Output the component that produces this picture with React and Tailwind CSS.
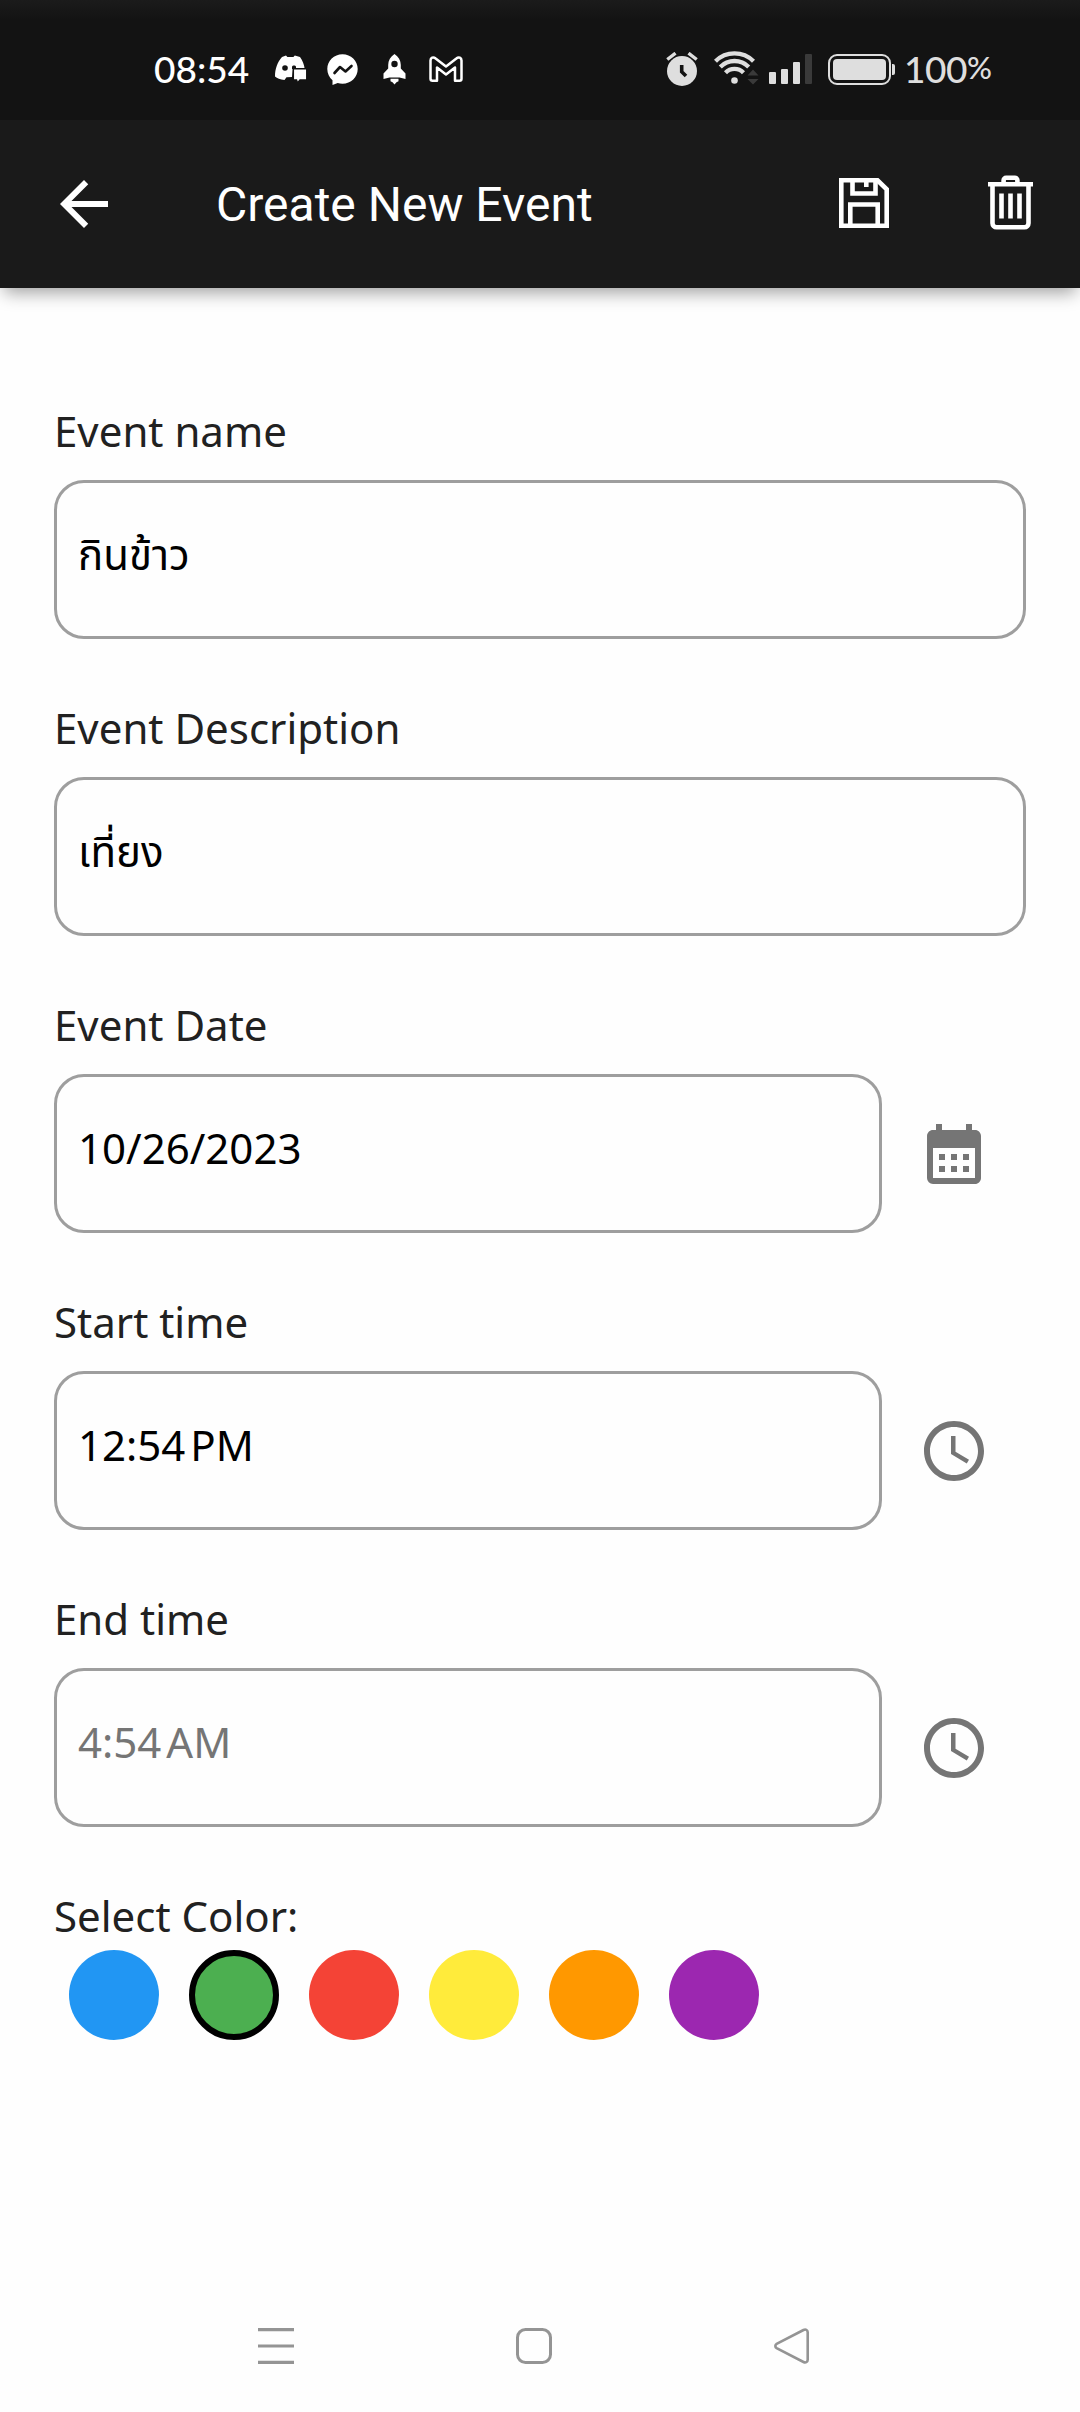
import React from "react";
import { MdArrowBack, MdCalendarMonth, MdAccessTime } from "react-icons/md";

const NOTO = "font-['Noto_Sans','Noto_Sans_Thai',sans-serif]";

function StatusBar() {
  return (
    <div className="flex h-[120px] items-center bg-[linear-gradient(to_bottom,#1b1b1b_0px,#131313_20px)] pt-[18px] font-['Lato',sans-serif] text-[37px] leading-[44px] text-white">
      <div className="ml-[154px] w-[121px] font-medium whitespace-nowrap">08:54</div>
      <svg className="h-[28px] w-[32px]" viewBox="0 0 32 28">
        <path
          fill="#fff"
          d="M7 2 11 .4l1.400 1.500h6L19.800.4 25 2c2.600 3.600 4.200 7.600 4.700 12H18l-1 8-5.500.300-2 2.700C5 24.500 2.200 23.300 0 21.500 0 13.500 2.500 7 7 2Z"
        />
        <circle cx="10" cy="13" r="2.800" fill="#131313" />
        <path fill="#131313" d="M17 11.500c.6-1.300 3.400-1.300 4 0v2.500h-4Z" />
        <path fill="#fff" stroke="#131313" strokeWidth="1.500" d="M18.300 13.800H31.800V25H25l-2.500 3-1-3h-3.200Z" />
      </svg>
      <svg className="ml-[20px] h-[31px] w-[31px]" viewBox="0 0 31 31">
        <path fill="#fff" d="M15.500.3C24 .3 30.700 6.700 30.700 15S24 29.700 15.500 29.700c-1.800 0-3.300-.2-4.800-.7L5.500 31v-4.700C2.300 23.500.3 19.600.3 15 .3 6.700 7 .3 15.500.3Z" />
        <path fill="none" stroke="#131313" strokeWidth="2.600" strokeLinejoin="round" strokeLinecap="round" d="m7.500 19 5.500-6 5.500 4.500 6-5.500" />
      </svg>
      <svg className="ml-[25px] h-[31px] w-[23px]" viewBox="0 0 23 31">
        <path fill="#fff" d="M11.500 0c4 2.800 6.300 6.500 6.300 11v3.500l4.700 5V25l-6-1.500h-10L.5 25v-5.500l4.700-5V11c0-4.500 2.300-8.200 6.300-11Z" />
        <circle cx="11.500" cy="10" r="3.200" fill="#131313" />
        <path fill="#fff" d="M7.500 24.800h8v2.500l-2 1-2 2.200-2-2.200-2-1Z" />
      </svg>
      <svg className="ml-[23px] h-[26px] w-[34px]" viewBox="0 0 34 26">
        <path
          fill="none"
          stroke="#fff"
          strokeWidth="2.500"
          strokeLinejoin="round"
          d="M8 24.700H3.500a2 2 0 0 1-2-2V4.500c0-2.600 2.800-4 4.800-2.300L17 10.500 27.700 2.200c2-1.700 4.800-.3 4.800 2.300v18.200a2 2 0 0 1-2 2H26V11.500l-9 7-9-7Z"
        />
      </svg>

      <svg className="ml-[203px] h-[34px] w-[32px]" viewBox="0 0 32 34">
        <circle cx="16" cy="19" r="15" fill="#dedede" />
        <path fill="none" stroke="#dedede" strokeWidth="3.400" d="m1.300 7.500 8.200-6.300M30.700 7.500l-8.200-6.300" />
        <path fill="none" stroke="#131313" strokeWidth="3.600" d="M15.700 13v6.800l4.300 4.300" />
      </svg>
      <svg className="mb-[3px] ml-[16px] h-[35px] w-[45px]" viewBox="0 0 45 35">
        <g fill="none" stroke="#dedede" strokeWidth="4.300">
          <path d="M1.500 11.200a27 27 0 0 1 38 0" />
          <path d="M6.300 16.900a20 20 0 0 1 28.400 0" />
          <path d="M11.500 22.700a12.600 12.600 0 0 1 18 0" />
        </g>
        <circle cx="20.500" cy="30.500" r="3.300" fill="#dedede" />
        <path fill="#3a3a3a" d="m39 19.500 5.500 6h-11ZM39 34.500l5.500-5.500h-11Z" />
      </svg>
      <div className="mb-[2px] ml-[10px] flex h-[31px] items-end gap-[5px]">
        <div className="h-[12px] w-[7px] rounded-[1px] bg-[#dedede]" />
        <div className="h-[15px] w-[7px] rounded-[1px] bg-[#dedede]" />
        <div className="h-[22px] w-[7px] rounded-[1px] bg-[#dedede]" />
        <div className="h-[30px] w-[7px] rounded-[1px] bg-[#3a3a3a]" />
      </div>
      <div className="ml-[16px] h-[31px] w-[63px] rounded-[9px] border-2 border-[#dedede] p-[3px]">
        <div className="h-full w-full rounded-[4px] bg-[#dedede]" />
      </div>
      <div className="ml-px h-[11px] w-[3px] rounded-r-[2px] bg-[#dedede]" />
      <div className="ml-[9px] flex items-start font-medium whitespace-nowrap text-[#dedede]">
        <span className="tracking-[-0.5px]">100</span>
        <span className="text-[31px] leading-[40px]">%</span>
      </div>
    </div>
  );
}

function SaveIcon() {
  return (
    <svg className="mb-[2px] h-[50px] w-[50px]" viewBox="0 0 50 50" fill="none" stroke="#fff" strokeWidth="4.600">
      <path d="M2.300 2.300h36.200l9.200 9v36.400H2.300Z" />
      <path d="M13.500 2.300v13.200h23V2.300" />
      <path d="M27.300 2v7" />
      <path d="M11.300 47.700V26.500h27.400v21.200" />
    </svg>
  );
}

function TrashIcon() {
  return (
    <svg className="mb-[3px] h-[55px] w-[45px]" viewBox="0 0 45 55" fill="none" stroke="#fff" strokeWidth="4.600">
      <path d="M0 9.200h45" />
      <path d="M15.600 9V5.300a2.500 2.500 0 0 1 2.500-2.500h8.800a2.500 2.500 0 0 1 2.500 2.500V9" />
      <path d="M4.500 10v38.200a4 4 0 0 0 4 4h28a4 4 0 0 0 4-4V10" />
      <path d="M13.500 18.500v25M22.500 18.500v25M31.500 18.500v25" />
    </svg>
  );
}

function AppBar() {
  return (
    <div className="flex h-[168px] items-center bg-[#1a1a1a] text-white">
      <MdArrowBack className="ml-[48px] size-[72px]" />
      <h1 className="mt-[2px] ml-[96px] w-[623px] font-['Roboto',sans-serif] text-[48px] leading-[56px] font-normal whitespace-nowrap">
        Create New Event
      </h1>
      <SaveIcon />
      <div className="ml-[99px]">
        <TrashIcon />
      </div>
    </div>
  );
}

function Label({ children }) {
  return <div className="h-[57px] text-[42px] leading-[57px] whitespace-nowrap text-[#212121]">{children}</div>;
}

function Time({ clock, period }) {
  return (
    <>
      {clock}
      <span className="tracking-[-2px]">{"\u202f"}</span>
      {period}
    </>
  );
}

function Field({ label, value, muted, icon: Icon }) {
  return (
    <div className="mb-[60px]">
      <Label>{label}</Label>
      <div className="mt-[21px] flex items-center">
        <div
          className={`h-[159px] flex-1 rounded-[30px] border-[3px] border-[#9e9e9e] pt-[42px] pl-[21px] text-[42px] leading-[57px] ${
            muted ? "text-[#757575]" : "text-black"
          }`}
        >
          {value}
        </div>
        {Icon && (
          <div className="flex w-[144px] justify-center">
            <Icon className="size-[72px] text-[#757575]" />
          </div>
        )}
      </div>
    </div>
  );
}

const swatches = [
  "bg-[#2196f3]",
  "border-[6px] border-black bg-[#4caf50]",
  "bg-[#f44336]",
  "bg-[#ffeb3b]",
  "bg-[#ff9800]",
  "bg-[#9c27b0]",
];

function NavBar() {
  return (
    <div className="mt-auto flex h-[84px] items-start pl-[258px]">
      <svg className="h-[36px] w-[36px]" viewBox="0 0 36 36">
        <path fill="none" stroke="#949494" strokeWidth="3.200" d="M0 1.600h36M0 18h36M0 34.400h36" />
      </svg>
      <svg className="ml-[222px] h-[36px] w-[36px]" viewBox="0 0 36 36">
        <rect x="1.500" y="1.500" width="33" height="33" rx="8" fill="none" stroke="#949494" strokeWidth="3" />
      </svg>
      <svg className="ml-[222px] h-[36px] w-[35px]" viewBox="0 0 35 36">
        <path
          fill="none"
          stroke="#949494"
          strokeWidth="2.600"
          d="M2.600 15.800 29.500 2c2-1 4.200-.2 4.200 2.300v27.400c0 2.500-2.200 3.300-4.200 2.300L2.600 20.200c-1.700-1-1.700-3.400 0-4.400Z"
        />
      </svg>
    </div>
  );
}

export default function App() {
  return (
    <div className={`flex h-[2412px] w-[1080px] flex-col overflow-hidden bg-[#fefefe] ${NOTO}`}>
      <header className="h-[288px] shadow-[0_9px_16px_-4px_rgba(0,0,0,0.36)]">
        <StatusBar />
        <AppBar />
      </header>
      <main className="px-[54px] pt-[114px]">
        <Field label="Event name" value="กินข้าว" />
        <Field label="Event Description" value="เที่ยง" />
        <Field label="Event Date" value="10/26/2023" icon={MdCalendarMonth} />
        <Field label="Start time" value={<Time clock="12:54" period="PM" />} icon={MdAccessTime} />
        <Field label="End time" value={<Time clock="4:54" period="AM" />} muted icon={MdAccessTime} />
        <Label>Select Color:</Label>
        <div className="mt-[6px] flex gap-[30px] pl-[15px]">
          {swatches.map((swatch) => (
            <div key={swatch} className={`size-[90px] rounded-full ${swatch}`} />
          ))}
        </div>
      </main>
      <NavBar />
    </div>
  );
}
